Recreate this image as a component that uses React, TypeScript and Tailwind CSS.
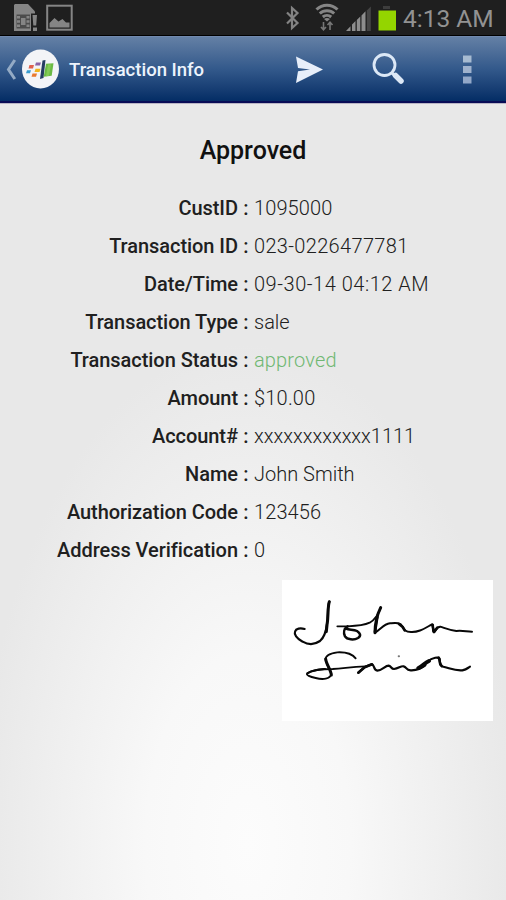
type Detail = {
  label: string;
  value: string;
  valueClass?: string;
};

const details: Detail[] = [
  { label: "CustID", value: "1095000", valueClass: "tracking-[0.1px]" },
  { label: "Transaction ID", value: "023-0226477781", valueClass: "tracking-[0.33px]" },
  { label: "Date/Time", value: "09-30-14 04:12 AM", valueClass: "tracking-[0.53px]" },
  { label: "Transaction Type", value: "sale" },
  { label: "Transaction Status", value: "approved", valueClass: "tracking-[0.15px] text-[#70b873]" },
  { label: "Amount", value: "$10.00", valueClass: "tracking-[0.2px]" },
  { label: "Account#", value: "xxxxxxxxxxxx1111" },
  { label: "Name", value: "John Smith" },
  { label: "Authorization Code", value: "123456", valueClass: "tracking-[0.1px]" },
  { label: "Address Verification", value: "0" },
];

function StatusBar() {
  return (
    <div className="flex h-9 items-center justify-between border-b border-black bg-[#1f1f1f]">
      <svg className="h-[35px] w-[90px]" viewBox="0 0 90 35" aria-hidden="true">
        <path d="M14 5l1-1h13l7 7.500V31H14z" fill="#858585" />
        <path d="M16.500 14.500H30v14H16.500z" fill="#4c4c4c" />
        <path d="M17 16h3v2.500h-3zM17 20.300h3v2.500h-3zM17 24.600h3v2.500h-3zM26.500 16h3v2.500h-3zM26.500 20.300h3v2.500h-3zM26.500 24.600h3v2.500h-3zM21 18h4.500v7H21z" fill="#858585" />
        <path d="M31 13.500h7V32h-7z" fill="#1f1f1f" />
        <path d="M32.500 15h4.500l-.8 10.500h-2.900zM33 27.500h4V31h-4z" fill="#858585" />
        <rect x="47.200" y="5.700" width="24.500" height="24" fill="none" stroke="#858585" strokeWidth="2" />
        <path d="M49.500 27.500V23l5-5 4 3.500 4-2.500 3.500 3.500h3.500v5z" fill="#858585" />
      </svg>
      <div className="flex items-center">
        <svg className="h-[35px] w-[119px]" viewBox="280 0 119 35" aria-hidden="true">
          <path d="m287 12.500 10.500 10.500-5.500 5V8l5.500 5L287 23.500" fill="none" stroke="#838383" strokeWidth="2.200" />
          <g fill="none" stroke="#858585" strokeWidth="3">
            <path d="M316.500 9.500a15 15 0 0 1 21 0" />
            <path d="M319.800 13.500a10.500 10.500 0 0 1 14.400 0" />
            <path d="M322.800 17a6.500 6.500 0 0 1 8.400 0" />
          </g>
          <path d="m324 19 3 2.500 3-2.500a5 5 0 0 0-6 0z" fill="#858585" />
          <path d="M323.500 22v7.500m-2.500-2.500 2.500 2.700 2.500-2.700M330 30v-7.500m-2.500 2.500 2.500-2.700 2.500 2.700" fill="none" stroke="#777" strokeWidth="1.600" />
          <path d="M346 31l4.500-4.700V31zM352 31v-6.500l3.500-3.500v10zM356.800 31V20l3.500-3.500V31zM361.500 31V15.500l4-4.200V31z" fill="#8d8d8d" />
          <path d="M366.800 31V10.500l4-4V31z" fill="#454545" />
          <path d="M383 6h7v3h-7z" fill="#3d3d3d" />
          <path d="M378.500 10.500H396v20h-17.500z" fill="#94d500" />
        </svg>
        <span className="w-[107px] pt-0.5 pl-1 text-[24.500px] leading-[33px] text-[#929292]">4:13 AM</span>
      </div>
    </div>
  );
}

function ActionBar() {
  return (
    <header className="flex h-[67px] items-center border-t border-b-2 border-t-[#7189ae] border-b-[#080b55] bg-linear-to-b from-[#6480a5] via-[#33598b] to-[#042d65]">
      <svg className="h-[64px] w-[69px]" viewBox="0 37 69 64" aria-hidden="true">
        <path d="M14.800 60 8.500 69.500l6.300 9.500" fill="none" stroke="#94abc5" strokeWidth="3" />
        <ellipse cx="40.500" cy="69" rx="18.500" ry="19.500" fill="#f3f4f7" />
        <path d="M36 62.500h5l-1 3h-5z" fill="#8b63a8" />
        <path d="M29.500 65h4.500l-1 3.500h-4.500z" fill="#e1604d" />
        <path d="M35.500 68.700h5l-1 3.300h-5z" fill="#f1b51e" />
        <path d="M27 70.300h4l-1 3h-4z" fill="#399ccf" />
        <path d="M32.500 73.500h4.500l-1 3.200h-4.500z" fill="#e9792f" />
        <path d="m42.500 60.500 3-.5-2 18-3.500 1z" fill="#243c62" />
        <path d="m46 63.800 7.500-.6-1.800 12.500-8 1z" fill="#6bba45" />
        <path d="m48 64.500 3-.2-2 11.500-3 .4z" fill="#83cb56" />
      </svg>
      <h1 className="flex-1 pt-1 text-[18.500px] font-medium text-[#edf3fc]">Transaction Info</h1>
      <svg className="h-[64px] w-[236px]" viewBox="270 37 236 64" aria-label="Send, search, more options">
        <path d="M296 56.500 323 69.500 296 83l2-11.700 12-1.800-12-1.500z" fill="#e8effa" />
        <circle cx="384.500" cy="65" r="10.500" fill="none" stroke="#dce8f6" strokeWidth="2.800" />
        <path d="m392 73 3 3" stroke="#dce8f6" strokeWidth="3" />
        <path d="m395.500 75.500 5.500 5.500" stroke="#dce8f6" strokeWidth="5.500" strokeLinecap="round" />
        <path d="M463 55.500h8.500v7H463z" fill="#a7bbd1" />
        <path d="M463 66h8.500v7H463z" fill="#9fb2cd" />
        <path d="M463 76.500h8.500v7H463z" fill="#93a8c8" />
      </svg>
    </header>
  );
}

function DetailRow({ label, value, valueClass = "" }: Detail) {
  return (
    <div className="flex h-[38px] text-[20px] leading-[38px]">
      <dt className="flex font-medium">
        <span className="w-[238px] text-right tracking-[-0.05px]">{label}</span>
        <span className="w-4 text-center">:</span>
      </dt>
      <dd className={`font-light ${valueClass}`}>{value}</dd>
    </div>
  );
}

function Signature() {
  return (
    <div className="mt-[11px] mr-[13px] ml-auto h-[141px] w-[211px] bg-white">
      <svg className="h-full w-full" viewBox="18 19 633 423" fill="none" stroke="#080808" strokeLinecap="round" strokeLinejoin="round" aria-label="Signature">
        <path d="M160 84C153 99 158 124 153 151C150 176 145 191 132 202C116 213 96 213 80 204C61 194 54 181 57 174C60 164 73 162 86 166" strokeWidth="6.500" />
        <path d="M160 84C154 104 158 126 153 154L151 174" strokeWidth="9" />
        <path d="M184 158H215C240 157 264 155 281 147C298 137 309 117 314 102" strokeWidth="5.500" />
        <path d="M215 158C203 165 202 178 207 188C213 198 234 200 246 193C257 186 252 178 243 172C232 166 220 170 210 165" strokeWidth="7.500" />
        <path d="M314 102C303 124 297 149 297 177" strokeWidth="9" />
        <path d="M297 177C315 166 323 151 342 149C359 148 373 146 380 159C385 169 388 174 405 175C429 176 444 165 468 152C476 150 466 172 474 176C480 171 480 160 493 159C509 164 520 169 541 172C560 170 572 174 588 174" strokeWidth="6" />
        <path d="M369 151 380 160 386 170M469 154 474 175 484 162M304 130 297 174" strokeWidth="8" />
        <path d="M239 254C228 240 205 235 184 236C163 239 147 244 149 258C151 273 165 291 166 302C162 316 141 319 119 313C103 310 88 304 94 299C111 288 141 286 170 286C204 285 220 279 269 278" strokeWidth="5.500" />
        <path d="M149 256C151 272 165 290 166 304" strokeWidth="9" />
        <path d="M94 299C112 288 133 287 147 286" strokeWidth="6" />
        <path d="M247 297C261 285 265 277 287 272C297 273 291 289 304 291C319 290 327 276 338 276C347 278 345 286 354 286C368 285 374 276 383 278C393 280 389 292 407 290C422 289 434 286 448 275" strokeWidth="6.500" />
        <path d="M247 297 266 281 288 272" strokeWidth="8" />
        <path d="M427 283C440 278 445 268 459 262" strokeWidth="12" />
        <path d="M453 265C470 251 489 248 491 257C492 271 493 278 505 280C527 286 539 292 559 290C573 287 575 283 582 279" strokeWidth="6.500" />
        <path d="M488 252C494 260 487 269 497 277" strokeWidth="8" />
        <path d="M368 248h1" stroke="#777" strokeWidth="6" />
      </svg>
    </div>
  );
}

export default function App() {
  return (
    <div className="flex h-[900px] w-[506px] flex-col overflow-hidden bg-[#e8e8e8] font-['Roboto','Liberation_Sans',sans-serif] text-[#202020]">
      <StatusBar />
      <ActionBar />
      <main className="flex-1 border-t border-[#b9b4c4] bg-[radial-gradient(ellipse_270px_500px_at_49%_93%,#fcfcfc_0%,#f8f8f8_38%,#e8e8e8_100%)] pt-[28px]">
        <h2 className="h-[37px] text-center text-[25px] leading-[37px] font-medium text-[#111111]">Approved</h2>
        <dl className="pt-[20px]">
          {details.map((detail) => (
            <DetailRow key={detail.label} {...detail} />
          ))}
        </dl>
        <Signature />
      </main>
    </div>
  );
}
